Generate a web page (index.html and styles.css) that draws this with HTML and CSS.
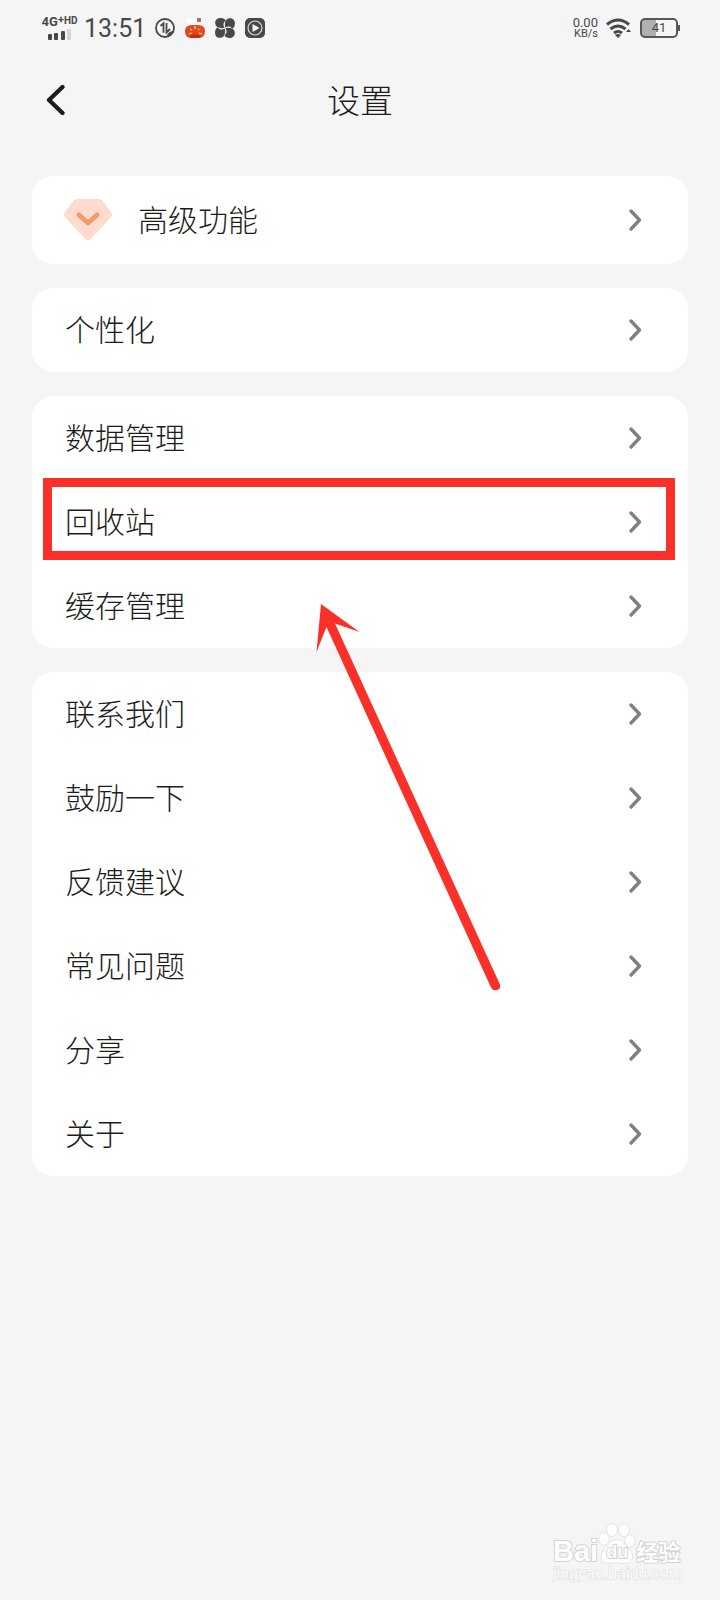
FILE: index.html
```html
<!DOCTYPE html>
<html lang="zh-CN">
<head>
<meta charset="utf-8">
<meta name="viewport" content="width=device-width, initial-scale=1">
<title>设置</title>
<link rel="stylesheet" href="styles.css">
</head>
<body>
<svg class="defs" aria-hidden="true">
  <symbol id="chevron" viewBox="0 0 14 22"><path d="M3 2l8.500 9L3 20" fill="none" stroke="currentColor" stroke-width="3.300" stroke-linecap="round" stroke-linejoin="round"/></symbol>
  <symbol id="petal" viewBox="0 0 20 20"><path d="M9.500 9.800C5 10.800.8 9.500.3 6-.4 2 2.500-.2 6 .1 8.800.4 10.500 1.500 10.500 3 8 4.500 8 7.500 9.500 9.800z" fill="#484848"/></symbol>
</svg>
<div class="page">
  <div class="status">
    <div class="network">
      <span class="network-type">4G<sup class="plus">+</sup><small class="hd">HD</small></span>
      <svg class="bars" viewBox="0 0 24 11" aria-hidden="true"><g fill="#484848"><rect y="5" width="4" height="6" rx="1"/><rect x="6" y="4" width="4" height="7" rx="1"/><rect x="13" y="2" width="4" height="9" rx="1"/></g><rect x="19" width="4" height="11" rx="1" fill="#d4d4d4"/></svg>
    </div>
    <span class="clock">13:51</span>
    <div class="apps">
      <svg class="app" viewBox="0 0 20 20" aria-hidden="true"><circle cx="10" cy="10" r="9" fill="none" stroke="#484848" stroke-width="1.800"/><path d="M5.500 8l3-2.800v9.500M11.500 5v9.500l3.500-3.500" fill="none" stroke="#484848" stroke-width="1.800"/><path d="M12 18.500q0-5 6.500-5.500-1 4-6.500 5.500z" fill="#484848"/></svg>
      <svg class="app" viewBox="0 0 20 20" aria-hidden="true"><path d="M2 0h15v8H2z" fill="#fcfcfc"/><path d="M12 0h4v4h-4z" fill="#bd6858"/><path d="M0 13q0-6 7-6h6q7 0 7 6 0 7-6 7H6q-6 0-6-7z" fill="#df4a20"/><path d="M5 11l2 1m3-4v3m4 0l-1 1M4 16l3-1m10 1l-3-1" stroke="#ffd9a0" stroke-width="1.200"/><path d="M4 18q6-3 12 0l-2 2H6z" fill="#bd2c17"/></svg>
      <svg class="app" viewBox="0 0 20 20" aria-hidden="true"><use href="#petal" width="20" height="20"/><use href="#petal" width="20" height="20" transform="rotate(90 10 10)"/><use href="#petal" width="20" height="20" transform="rotate(180 10 10)"/><use href="#petal" width="20" height="20" transform="rotate(270 10 10)"/></svg>
      <svg class="app" viewBox="0 0 20 20" aria-hidden="true"><rect width="20" height="20" rx="5" fill="#484848"/><circle cx="10" cy="10" r="7" fill="none" stroke="#ddd" stroke-width="1.200"/><path d="M7.500 6l7 4-7 4z" fill="#f5f5f5"/></svg>
    </div>
    <div class="status-right">
      <div class="speed"><span class="speed-value">0.00</span><span class="speed-unit">KB/s</span></div>
      <svg class="wifi" viewBox="0 0 26 20" aria-hidden="true"><g fill="none" stroke="#484848" stroke-width="3"><path d="M1 6.500q11-9 22 0"/><path d="M4.500 11q7.500-6 15 0"/><path d="M8 15q4-3 8 0"/></g><path d="M9 17q3-2 6 0l-3 3z" fill="#484848"/><path d="M20 14l2.500-3 2.500 3z" fill="#484848"/></svg>
      <div class="battery"><span class="battery-level">41</span></div>
    </div>
  </div>

  <header class="header">
    <button class="back" type="button" aria-label="返回"><svg class="back-icon" viewBox="0 0 20 32" aria-hidden="true"><path d="M16.500 3L3 16l13.500 13" fill="none" stroke="#1c1c1c" stroke-width="4.300" stroke-linecap="round" stroke-linejoin="round"/></svg></button>
    <h1 class="title">设置</h1>
  </header>

  <main class="groups">
    <section class="card">
      <button class="row row-premium" type="button"><svg class="gem" viewBox="0 0 48 42" aria-hidden="true"><path d="M13 0h22q2 0 3 1l9 12q2 3 0 5L27 40q-3 3-6 0L1 18q-2-2 0-5L10 1q1-1 3-1z" fill="#ffdbce"/><path d="M15 16l9 8 9-8" fill="none" stroke="#f19a6c" stroke-width="5" stroke-linecap="round" stroke-linejoin="round"/></svg><span class="label">高级功能</span><svg class="chevron" aria-hidden="true"><use href="#chevron"/></svg></button>
    </section>
    <section class="card">
      <button class="row" type="button"><span class="label">个性化</span><svg class="chevron" aria-hidden="true"><use href="#chevron"/></svg></button>
    </section>
    <section class="card">
      <button class="row" type="button"><span class="label">数据管理</span><svg class="chevron" aria-hidden="true"><use href="#chevron"/></svg></button>
      <button class="row row-marked" type="button"><span class="label">回收站</span><svg class="chevron" aria-hidden="true"><use href="#chevron"/></svg></button>
      <button class="row" type="button"><span class="label">缓存管理</span><svg class="chevron" aria-hidden="true"><use href="#chevron"/></svg></button>
    </section>
    <section class="card">
      <button class="row" type="button"><span class="label">联系我们</span><svg class="chevron" aria-hidden="true"><use href="#chevron"/></svg></button>
      <button class="row" type="button"><span class="label">鼓励一下</span><svg class="chevron" aria-hidden="true"><use href="#chevron"/></svg></button>
      <button class="row" type="button"><span class="label">反馈建议</span><svg class="chevron" aria-hidden="true"><use href="#chevron"/></svg></button>
      <button class="row" type="button"><span class="label">常见问题</span><svg class="chevron" aria-hidden="true"><use href="#chevron"/></svg></button>
      <button class="row" type="button"><span class="label">分享</span><svg class="chevron" aria-hidden="true"><use href="#chevron"/></svg></button>
      <button class="row" type="button"><span class="label">关于</span><svg class="chevron" aria-hidden="true"><use href="#chevron"/></svg></button>
    </section>
    <svg class="arrow" viewBox="0 0 190 390" aria-hidden="true"><path d="M5 0L43.500 28 19 19.500 184 380.500Q185 385 181 386 177 387 175 383.500L10.500 23 .5 48z" fill="#fa3029"/></svg>
  </main>

  <footer class="watermark">
    <div class="brand">
      <span class="brand-latin">Bai</span>
      <span class="paw"><svg class="paw-icon" viewBox="0 0 38 42" aria-hidden="true"><g fill="#fdfdfd" stroke="#d4d4d4"><ellipse cx="6" cy="17" rx="5" ry="6"/><ellipse cx="14" cy="8" rx="5" ry="6.500"/><ellipse cx="26" cy="8" rx="5" ry="6.500"/><ellipse cx="32" cy="19" rx="5" ry="6"/><path d="M19 18c6 0 8 5 12 9 6 6 3 14-4 14-5 0-11-1-16 0-8 0-10-8-5-13 4-4 6-10 13-10z"/></g></svg><span class="paw-text">du</span></span>
      <span class="brand-cn">经验</span>
    </div>
    <span class="site">jingyan.baidu.com</span>
  </footer>
</div>
</body>
</html>
```
FILE: styles.css
```css
* { box-sizing: border-box; }
body {
  margin: 0;
  background: #f5f5f5;
  color: #1c1c1c;
  font-family: "Liberation Sans", "Noto Sans CJK SC", sans-serif;
}
.defs { position: absolute; width: 0; height: 0; }
.page { display: flex; flex-direction: column; min-height: 100vh; }

.status {
  display: flex;
  align-items: center;
  height: 56px;
  padding: 0 42px 0 41px;
  color: #484848;
  font-family: Roboto, sans-serif;
}
.network { display: flex; flex-direction: column; align-items: center; gap: 2px; width: 37px; }
.network-type { display: flex; font-size: 13px; line-height: 10px; font-weight: 700; }
.plus { font-size: 11px; line-height: 6px; }
.hd { font-size: 10px; line-height: 8px; }
.bars { width: 24px; height: 11px; }
.clock { margin-left: 6px; padding-top: 2px; font-size: 25px; line-height: 32px; }
.apps { display: flex; gap: 10px; margin-left: 9px; }
.app { width: 20px; height: 20px; }
.status-right { display: flex; align-items: center; gap: 8px; margin-left: auto; }
.speed { display: flex; flex-direction: column; align-items: flex-end; line-height: 11px; }
.speed-value { font-size: 13px; }
.speed-unit { font-size: 11px; }
.wifi { width: 26px; height: 20px; }
.battery {
  position: relative;
  width: 38px;
  height: 20px;
  border: 2px solid #585858;
  border-radius: 5px;
  background: linear-gradient(90deg, #b0b0b0 41%, #f5f5f5 41%);
  text-align: center;
}
.battery::after {
  content: "";
  position: absolute;
  right: -4px;
  top: 5px;
  width: 2px;
  height: 6px;
  background: #585858;
}
.battery-level { display: block; font-size: 13px; line-height: 16px; }

.header {
  display: grid;
  grid-template-columns: 64px 1fr 64px;
  align-items: center;
  height: 88px;
  padding: 0 24px;
}
.back { display: flex; justify-content: center; padding: 0; border: 0; background: none; }
.back-icon { width: 20px; height: 32px; }
.title { margin: 0; padding-top: 4px; font-size: 33px; line-height: 48px; font-weight: 300; text-align: center; }

.groups {
  position: relative;
  display: flex;
  flex-direction: column;
  gap: 24px;
  padding: 32px 32px 48px;
}
.card { border-radius: 22px; background: #fff; }
.row {
  position: relative;
  display: flex;
  align-items: center;
  width: 100%;
  height: 84px;
  padding: 0 46px 0 33px;
  border: 0;
  background: none;
  color: inherit;
  font: inherit;
  text-align: left;
}
.row-premium { height: 88px; padding-left: 32px; }
.gem { width: 48px; height: 42px; margin-right: 26px; }
.label { padding-top: 2px; font-size: 30px; line-height: 40px; font-weight: 300; }
.chevron { width: 14px; height: 22px; margin-left: auto; color: #808080; }
.row-marked::after {
  content: "";
  position: absolute;
  inset: -2px 13px 4px 11px;
  border: 9px solid #fa3029;
}
.arrow { position: absolute; top: 460px; left: 316px; width: 190px; height: 390px; pointer-events: none; }

.watermark {
  display: flex;
  flex-direction: column;
  align-items: flex-start;
  align-self: flex-end;
  margin: auto 38px 16px 0;
  color: #fdfdfd;
  -webkit-text-stroke: 2px #d4d4d4;
  paint-order: stroke fill;
}
.brand { display: flex; align-items: flex-end; }
.brand-latin { font-size: 29px; line-height: 26px; font-weight: 700; }
.paw { position: relative; width: 38px; height: 42px; }
.paw-icon { display: block; width: 38px; height: 42px; }
.paw-text { position: absolute; inset: 20px 0 0; font-size: 18px; line-height: 20px; font-weight: 700; text-align: center; }
.brand-cn { font-size: 22px; line-height: 22px; font-weight: 700; }
.site { font-size: 16px; line-height: 20px; -webkit-text-stroke: 1px #d8d8d8; }
```
